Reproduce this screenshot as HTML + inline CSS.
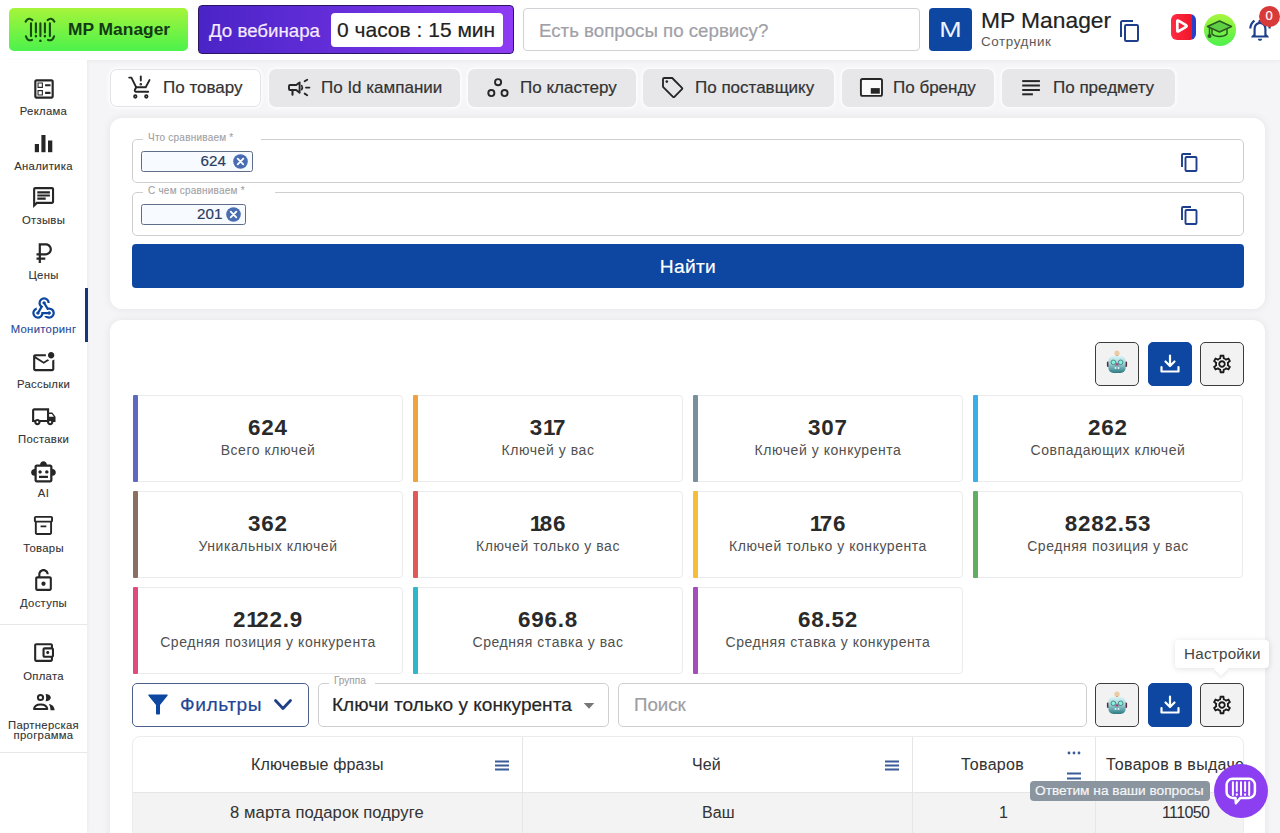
<!DOCTYPE html>
<html><head><meta charset="utf-8"><style>
*{box-sizing:border-box;margin:0;padding:0}
html,body{width:1280px;height:833px;overflow:hidden;background:#f5f5f7;font-family:"Liberation Sans",sans-serif;color:#222}
.abs{position:absolute}
.t{position:absolute;white-space:nowrap;-webkit-text-stroke:0.2px currentColor}
.th{-webkit-text-stroke:0.05px currentColor}
.nav,.flabel{-webkit-text-stroke:0.1px currentColor}
#header{position:absolute;left:0;top:0;width:1280px;height:60px;background:#fff;box-shadow:0 1px 4px rgba(0,0,0,.05)}
#sidebar{position:absolute;left:0;top:60px;width:87px;height:773px;background:#fff;box-shadow:1px 0 3px rgba(0,0,0,.03)}
.nav{position:absolute;left:0;width:87px;text-align:center;font-size:11.3px;color:#333;line-height:11.5px;letter-spacing:0.3px}
.tab{position:absolute;top:68.5px;height:38px;border-radius:7px;background:#e7e7e9;box-shadow:0 0 3px 2px rgba(255,255,255,.7)}
.tab.active{background:#fff;border:1px solid #e4e4e6}
.tab .t{top:10px;font-size:17px;color:#333;line-height:20px}
.card{position:absolute;left:110px;width:1155px;background:#fff;border-radius:12px;box-shadow:0 0 9px rgba(0,0,0,.075)}
.field{position:absolute;left:132px;width:1112px;border:1px solid #cfcfd2;border-radius:5px}
.flabel{position:absolute;font-size:10px;color:#a0a0a4;background:#fff;padding:0 5px;line-height:12px;white-space:nowrap}
.chip{position:absolute;height:21px;border:1.5px solid #606d8a;border-radius:2.5px;background:#f7fbff}
.chip .t{font-size:15.2px;color:#2c3b63;top:1px;line-height:18px}
.chip svg{position:absolute}
.ib{position:absolute;width:44px;height:44px;border:1.5px solid #3c3c3c;border-radius:5px;background:#f2f2f2}
.ib.blue{background:#0d47a1;border-color:#0d47a1}
.stat{position:absolute;width:270px;height:87px;border:1px solid #ebebed;border-radius:4px;background:#fff}
.stat .bar{position:absolute;left:-1px;top:-1px;bottom:-1px;width:5px;border-radius:1px}
.stat .n{position:absolute;left:0;right:0;top:18.5px;text-align:center;font-size:22.4px;font-weight:bold;color:#2a2a2a;letter-spacing:0.8px;line-height:26px}
.stat .n i{font-style:normal;letter-spacing:-2.4px}
.stat .l{position:absolute;left:0;right:0;top:46.2px;text-align:center;font-size:14px;color:#505050;letter-spacing:0.55px;line-height:17px}
.th{position:absolute;font-size:16px;color:#333;line-height:19px;white-space:nowrap;letter-spacing:0.15px}
</style></head><body>
<div id="header"></div>
<div class="abs" style="left:9px;top:8px;width:179px;height:43px;border-radius:5px;background:linear-gradient(#a6f43a,#4cf24c)"></div>
<svg class="abs" style="left:20px;top:12px" width="40" height="34" viewBox="0 0 40 34" fill="none" stroke="#164a12" stroke-width="2.1" stroke-linecap="round">
<path d="M5.6 9.6Q8.6 4.8 12.4 8.1M27.6 8.1Q31.4 4.8 34.4 9.6M5.9 24.3Q7.4 29.6 12 27.9M28 27.9Q32.6 29.6 34.1 24.3"/>
<path d="M11 11.2v12.9M29.9 11.2v12.9M15.9 11.2v9.3M24.9 11.2v9.3M20.4 11.2v12.9"/>
<path d="M15.9 23.9v.3M24.9 23.9v.3M20.4 28.6v.3" stroke-width="2.4"/></svg>
<div class="t" style="left:68px;top:19px;font-size:17.4px;font-weight:bold;color:#123a14;line-height:20px;-webkit-text-stroke:0">MP Manager</div>
<div class="abs" style="left:198px;top:5px;width:316px;height:49px;border-radius:4px;border:1.6px solid #2a1660;background:linear-gradient(90deg,#4a24c6,#6b30de 55%,#8e3cf4)"></div>
<div class="t" style="left:209px;top:19.5px;font-size:18.7px;color:#f6eaff;line-height:22px">До вебинара</div>
<div class="abs" style="left:331px;top:12.5px;width:172px;height:34px;background:#fff;border-radius:4px"></div>
<div class="t" style="left:337px;top:18px;font-size:21px;color:#222;line-height:24px">0 часов : 15 мин</div>
<div class="abs" style="left:523px;top:8px;width:397px;height:43px;border:1px solid #d2d2d6;border-radius:4px;background:#fff"></div>
<div class="t" style="left:539px;top:20px;font-size:18.7px;color:#a0a0a6;line-height:22px">Есть вопросы по сервису?</div>
<div class="abs" style="left:929px;top:8px;width:43px;height:43px;border-radius:4px;background:#0d47a1"></div>
<div class="t" style="left:929px;top:18px;width:43px;text-align:center;font-size:21.5px;color:#eef4ff;line-height:24px;transform:scaleX(1.25);-webkit-text-stroke:0">M</div>
<div class="t" style="left:981px;top:7px;font-size:22.8px;color:#222;line-height:26px">MP Manager</div>
<div class="t" style="left:981px;top:34px;font-size:13.4px;color:#5a5a5a;letter-spacing:0.6px;line-height:16px;-webkit-text-stroke:0">Сотрудник</div>
<svg class="abs" style="left:1119px;top:19px" width="22" height="24" viewBox="0 0 22 24" fill="none" stroke="#1d3f8c" stroke-width="2"><path d="M2 18V3.5C2 2.7 2.7 2 3.5 2H14"/><rect x="6" y="6" width="13" height="16" rx="1.2"/></svg>
<div class="abs" style="left:1170.5px;top:13.5px;width:25.5px;height:26px;border-radius:6px;background:linear-gradient(90deg,#ff2c44 0%,#f01628 83%,#2a3fc8 85%)"></div>
<svg class="abs" style="left:1170px;top:13px" width="26" height="26" viewBox="0 0 26 26" fill="none" stroke="#fff" stroke-width="2.7" stroke-linejoin="round"><path d="M7.3 8.6Q7.3 6.9 8.8 7.8L16 12.2Q17.3 13 16 13.8L8.8 18.2Q7.3 19.1 7.3 17.4Z"/></svg>
<div class="abs" style="left:1203.5px;top:13.5px;width:32px;height:32px;border-radius:50%;background:linear-gradient(#a8f53c,#4ef04e)"></div>
<svg class="abs" style="left:1206px;top:19px" width="27" height="22" viewBox="0 0 27 22" fill="none" stroke="#2a5a22" stroke-width="1.5" stroke-linejoin="round">
<path d="M1.5 7.5 13.5 2l12 5.5-12 5.5z" fill="#5fcf45"/><path d="M6 10v5c2 2 5 2.5 7.5 2.5s5.5-.5 7.5-2.5v-5"/><path d="M3.5 8.5v7"/><circle cx="3.5" cy="17" r="1.3" fill="#2a5a22"/></svg>
<svg class="abs" style="left:1247px;top:17px" width="26" height="26" viewBox="0 0 24 24" fill="#1d3f8c"><path d="M12 22c1.1 0 2-.9 2-2h-4c0 1.1.9 2 2 2zm6-6v-5c0-3.07-1.63-5.64-4.5-6.32V4c0-.83-.67-1.5-1.5-1.5s-1.5.67-1.5 1.5v.68C7.64 5.36 6 7.92 6 11v5l-2 2v1h16v-1l-2-2zm-2 1H8v-6c0-2.48 1.51-4.5 4-4.5s4 2.02 4 4.5v6zM7.58 4.08 6.15 2.65C3.75 4.48 2.17 7.3 2.03 10.5h2c.15-2.65 1.51-4.97 3.55-6.42zm12.39 6.42h2c-.15-3.2-1.73-6.02-4.12-7.85l-1.42 1.43c2.02 1.45 3.39 3.77 3.54 6.42z"/></svg>
<div class="abs" style="left:1258.5px;top:5.5px;width:21px;height:21px;border-radius:50%;background:#d83a3a"></div>
<div class="t" style="left:1258.5px;top:8px;width:21px;text-align:center;font-size:13px;color:#fff;line-height:15px">0</div>
<div id="sidebar"></div>
<svg class="abs" style="left:30.85px;top:75.65px;color:#262626" width="26.00" height="26.00" viewBox="0 0 24 24" fill="#262626"><path d="M13 7.5h5v2h-5zm0 7h5v2h-5zM19 3H5c-1.1 0-2 .9-2 2v14c0 1.1.9 2 2 2h14c1.1 0 2-.9 2-2V5c0-1.1-.9-2-2-2zm0 16H5V5h14v14zM11 6H6v5h5V6zm-1 4H7V7h3v3zm1 3H6v5h5v-5zm-1 4H7v-3h3v3z"/></svg>
<div class="nav" style="top:106px;color:#333">Реклама</div>
<svg class="abs" style="left:34px;top:134px" width="20" height="19" viewBox="0 0 20 19" fill="#262626"><rect x="0.8" y="10" width="4.2" height="8.2"/><rect x="7.4" y="1" width="4.1" height="17.2"/><rect x="14" y="6.5" width="4.3" height="11.7"/></svg>
<div class="nav" style="top:161px;color:#333">Аналитика</div>
<svg class="abs" style="left:30.70px;top:184.70px;color:#262626" width="25.20" height="25.20" viewBox="0 0 24 24" fill="#262626"><path d="M4 4h16v12H5.17L4 17.17V4m0-2c-1.1 0-1.99.9-1.99 2L2 22l4-4h14c1.1 0 2-.9 2-2V4c0-1.1-.9-2-2-2H4zm2 10h8v2H6v-2zm0-3h12v2H6V9zm0-3h12v2H6V6z"/></svg>
<div class="nav" style="top:215px;color:#333">Отзывы</div>
<svg class="abs" style="left:30.59px;top:239.59px;color:#262626" width="26.42" height="26.42" viewBox="0 0 24 24" fill="#262626"><path d="M13.5 3H7v9H5v2h2v2H5v2h2v3h2v-3h4v-2H9v-2h4.5c3.04 0 5.5-2.46 5.5-5.5S16.54 3 13.5 3zm0 9H9V5h4.5C15.43 5 17 6.57 17 8.5S15.43 12 13.5 12z"/></svg>
<div class="nav" style="top:270px;color:#333">Цены</div>
<svg class="abs" style="left:30.05px;top:294.61px;color:#0d47a1" width="27.10" height="27.10" viewBox="0 0 24 24" fill="#0d47a1"><path d="M7 21q-2.075 0-3.537-1.463Q2 18.075 2 16q0-1.8 1.113-3.163Q4.225 11.475 6 11.125V13.2q-.875.3-1.438 1.075Q4 15.05 4 16q0 1.25.875 2.125T7 19q1.250 0 2.125-.875T10 16v-1h5.875q.2-.225.487-.363Q16.65 14.5 17 14.5q.625 0 1.062.438.438.437.438 1.062t-.438 1.062Q17.625 17.5 17 17.5q-.35 0-.638-.137-.287-.138-.487-.363H11.9q-.35 1.725-1.725 2.863Q8.8 21 7 21Zm10 0q-1.4 0-2.55-.7-1.15-.7-1.8-1.8h2.675q.35.25.775.375Q16.525 19 17 19q1.25 0 2.125-.875T20 16q0-1.25-.875-2.125T17 13q-.5 0-.925.138-.425.137-.8.412l-3.05-5.075q-.525-.1-.875-.5Q11 7.575 11 7q0-.625.438-1.062Q11.875 5.5 12.5 5.5t1.062.438Q14 6.375 14 7v.213q0 .087-.05.212l2.175 3.650q.2-.05.425-.063Q16.775 11 17 11q2.075 0 3.538 1.462Q22 13.925 22 16q0 2.075-1.462 3.537Q19.075 21 17 21Zm-10-3.5q-.625 0-1.062-.438Q5.5 16.625 5.5 16q0-.55.35-.95.35-.4.85-.525l2.35-3.9q-.725-.675-1.138-1.613Q7.5 8.075 7.5 7q0-2.075 1.463-3.538Q10.425 2 12.5 2t3.538 1.462Q17.5 4.925 17.5 7h-2q0-1.25-.875-2.125T12.5 4q-1.25 0-2.125.875T9.5 7q0 1.075.65 1.887.65.813 1.650 1.063l-3.375 5.625q.05.125.063.213.012.087.012.212 0 .625-.438 1.062Q7.625 17.5 7 17.5Z"/></svg>
<div class="nav" style="top:324px;color:#1f4a9a">Мониторинг</div>
<svg class="abs" style="left:31.02px;top:349.98px;color:#262626" width="25.46" height="25.46" viewBox="0 0 24 24" fill="#262626"><path d="M22 8.98V18c0 1.1-.9 2-2 2H4c-1.1 0-2-.9-2-2V6c0-1.1.9-2 2-2h10.1c-.06.32-.1.66-.1 1s.04.68.1 1H4l8 5 3.67-2.29c.47.43 1.02.76 1.63.98L12 13 4 8v10h16V9.9c.74-.15 1.42-.48 2-.92zM16 5c0 1.66 1.34 3 3 3s3-1.34 3-3-1.34-3-3-3-3 1.34-3 3z"/></svg>
<div class="nav" style="top:379px;color:#333">Рассылки</div>
<svg class="abs" style="left:31.16px;top:403.66px;color:#262626" width="25.59" height="25.59" viewBox="0 0 24 24" fill="#262626"><path d="M20 8h-3V4H3c-1.1 0-2 .9-2 2v11h2c0 1.66 1.34 3 3 3s3-1.34 3-3h6c0 1.66 1.34 3 3 3s3-1.34 3-3h2v-5l-3-4zm-.5 1.5 1.96 2.5H17V9.5h2.5zM6 18c-.55 0-1-.45-1-1s.45-1 1-1 1 .45 1 1-.45 1-1 1zm2.22-3c-.55-.61-1.33-1-2.22-1s-1.67.39-2.22 1H3V6h12v9H8.22zM18 18c-.55 0-1-.45-1-1s.45-1 1-1 1 .45 1 1-.45 1-1 1z"/></svg>
<div class="nav" style="top:434px;color:#333">Поставки</div>
<svg class="abs" style="left:30.48px;top:458.64px;color:#262626" width="26.94" height="26.94" viewBox="0 0 24 24" fill="#262626"><path d="M20 9V7c0-1.1-.9-2-2-2h-3c0-1.66-1.34-3-3-3S9 3.34 9 5H6c-1.1 0-2 .9-2 2v2c-1.66 0-3 1.34-3 3s1.34 3 3 3v4c0 1.1.9 2 2 2h12c1.1 0 2-.9 2-2v-4c1.66 0 3-1.34 3-3s-1.34-3-3-3zm-2 10H6V7h12v12zm-9-6c-.83 0-1.5-.67-1.5-1.5S8.17 10 9 10s1.5.67 1.5 1.5S9.83 13 9 13zm7.5-1.5c0 .83-.67 1.5-1.5 1.5s-1.5-.67-1.5-1.5.67-1.5 1.5-1.5 1.5.67 1.5 1.5zM8 15h8v2H8v-2z"/></svg>
<div class="nav" style="top:488px;color:#333">AI</div>
<svg class="abs" style="left:32.34px;top:514.24px;color:#262626" width="22.92" height="22.92" viewBox="0 0 24 24" fill="#262626"><path d="M20 2H4c-1 0-2 .9-2 2v3.01c0 .72.43 1.34 1 1.69V20c0 1.1 1.1 2 2 2h14c.9 0 2-.9 2-2V8.7c.57-.35 1-.97 1-1.69V4c0-1.1-1-2-2-2zm-1 18H5V9h14v11zm1-13H4V4h16v3zM9 12h6v2H9z"/></svg>
<div class="nav" style="top:543px;color:#333">Товары</div>
<svg class="abs" style="left:31.24px;top:568.01px;color:#262626;transform:scaleX(-1)" width="25.02" height="25.02" viewBox="0 0 24 24" fill="#262626"><path d="M12 17c1.1 0 2-.9 2-2s-.9-2-2-2-2 .9-2 2 .9 2 2 2zm6-9h-1V6c0-2.76-2.24-5-5-5S7 3.24 7 6h2c0-1.66 1.34-3 3-3s3 1.34 3 3v2H6c-1.1 0-2 .9-2 2v10c0 1.1.9 2 2 2h12c1.1 0 2-.9 2-2V10c0-1.1-.9-2-2-2zm0 12H6V10h12v10z"/></svg>
<div class="nav" style="top:598px;color:#333">Доступы</div>
<svg class="abs" style="left:31.43px;top:640.30px;color:#262626" width="25.10" height="25.10" viewBox="0 0 24 24" fill="#262626"><path d="M21 7.28V5c0-1.1-.9-2-2-2H5c-1.11 0-2 .9-2 2v14c0 1.1.89 2 2 2h14c1.1 0 2-.9 2-2v-2.28c.59-.35 1-.98 1-1.72V9c0-.74-.41-1.37-1-1.72zM20 9v6h-7V9h7zM5 19V5h14v2h-6c-1.1 0-2 .9-2 2v6c0 1.1.9 2 2 2h6v2H5zm11-5.5c.83 0 1.5-.67 1.5-1.5s-.67-1.5-1.5-1.5-1.5.67-1.5 1.5.67 1.5 1.5 1.5z"/></svg>
<div class="nav" style="top:671px;color:#333">Оплата</div>
<svg class="abs" style="left:30px;top:690px" width="28" height="24" viewBox="0 0 28 24"><circle cx="10.5" cy="7.5" r="2.6" fill="none" stroke="#262626" stroke-width="2"/><path d="M15.7 4A5.1 3.6 0 0 1 15.7 11.2Q16.6 7.6 15.7 4Z" fill="#262626"/><path d="M4 19.1C4.3 15.6 7 14.4 10.6 14.4S17 15.6 17.3 19.1Z" fill="none" stroke="#262626" stroke-width="2" stroke-linejoin="round"/><path d="M18.8 14C22.3 14.5 24.6 16.8 24.6 20.3H20.5C20.5 17.8 19.9 15.5 18.8 14Z" fill="#262626"/></svg>
<div class="nav" style="top:719.5px;line-height:10.5px;color:#333">Партнерская<br>программа</div>
<div class="abs" style="left:85px;top:288px;width:2.7px;height:54px;background:#17357a"></div>
<div class="abs" style="left:0;top:624px;width:87px;height:1px;background:#e8e8ea"></div>
<div class="abs" style="left:0;top:752px;width:87px;height:1px;background:#e8e8ea"></div>
<div class="tab active" style="left:110px;width:151px"></div>
<svg class="abs" style="left:120px;top:70px" width="40" height="35" viewBox="0 0 40 35" fill="none" stroke="#262626" stroke-width="1.9" stroke-linecap="round" stroke-linejoin="round"><path d="M9.2 7.6h2.2l4.8 9.7h9.5l3.8-7.2"/><path d="M16.2 17.3l-1.3 2.4c-.5.9.1 2.1 1.2 2.1h12.1"/><circle cx="15.3" cy="26.5" r="1.3" stroke-width="1.7"/><circle cx="26.3" cy="26.5" r="1.3" stroke-width="1.7"/><path d="M20.8 6.5v4"/><circle cx="20.8" cy="14.3" r="0.5" stroke-width="1.6"/></svg>
<div class="t" style="left:163px;top:78px;font-size:17px;color:#333;line-height:20px">По товару</div>
<div class="tab" style="left:269px;width:191px"></div>
<svg class="abs" style="left:280px;top:70px" width="40" height="35" viewBox="0 0 40 35" fill="none" stroke="#262626" stroke-width="1.9" stroke-linecap="round" stroke-linejoin="round"><path d="M10 15h6.2l3.4-2.6v10.4L16.2 20H10c-.6 0-1-.4-1-1v-3c0-.6.4-1 1-1z"/><path d="M12.5 20.5v4.3" stroke-width="2.1"/><path d="M21.7 15.6q1.3 2 0 4" stroke-width="1.7"/><path d="M24.7 11.3l2.5-1.6M26 17.6h3.4M24.7 23.6l2.5 1.6"/></svg>
<div class="t" style="left:321px;top:78px;font-size:17px;color:#333;line-height:20px">По Id кампании</div>
<div class="tab" style="left:468px;width:168px"></div>
<svg class="abs" style="left:480px;top:70px" width="40" height="35" viewBox="0 0 40 35" fill="none" stroke="#262626" stroke-width="1.9"><circle cx="18.07" cy="12.18" r="3.05"/><circle cx="11.34" cy="23.03" r="3.05"/><circle cx="24.58" cy="23.03" r="3.05"/></svg>
<div class="t" style="left:520px;top:78px;font-size:17px;color:#333;line-height:20px">По кластеру</div>
<div class="tab" style="left:643px;width:191px"></div>
<svg class="abs" style="left:655px;top:70px" width="40" height="35" viewBox="0 0 40 35" fill="none" stroke="#262626" stroke-width="1.85" stroke-linejoin="round"><path d="M8 9.2Q8 8 9.2 8H17.2L27 17.8Q27.7 18.5 27 19.2L19.4 26.8Q18.7 27.5 18 26.8L8 16.8Z"/><circle cx="11.8" cy="11.6" r="1.3" fill="#262626" stroke="none"/></svg>
<div class="t" style="left:695px;top:78px;font-size:17px;color:#333;line-height:20px">По поставщику</div>
<div class="tab" style="left:842px;width:152px"></div>
<svg class="abs" style="left:850px;top:70px" width="40" height="35" viewBox="0 0 40 35" fill="none" stroke="#262626" stroke-width="1.9"><rect x="10.9" y="9" width="21.1" height="16.9" rx="1.6" fill="#fbfbfb"/><rect x="20.8" y="18.1" width="9" height="5.6" fill="#262626" stroke="none"/></svg>
<div class="t" style="left:893px;top:78px;font-size:17px;color:#333;line-height:20px">По бренду</div>
<div class="tab" style="left:1002px;width:173px"></div>
<svg class="abs" style="left:1020px;top:78px" width="22" height="19" viewBox="0 0 22 19" fill="#262626"><rect x="2.2" y="2.1" width="17.7" height="2"/><rect x="2.2" y="6.5" width="17.7" height="2"/><rect x="2.2" y="11" width="17.7" height="2"/><rect x="2.2" y="15.3" width="10.7" height="2"/></svg>
<div class="t" style="left:1053px;top:78px;font-size:17px;color:#333;line-height:20px">По предмету</div>
<div class="card" style="top:118px;height:191px"></div>
<div class="field" style="top:139px;height:44px"></div>
<div class="flabel" style="left:143px;top:132px;width:118px;letter-spacing:0.22px">Что сравниваем *</div>
<div class="chip" style="left:141px;top:151px;width:112px"></div>
<div class="t" style="left:200.5px;top:152px;font-size:15.2px;color:#2c3b63;line-height:18px">624</div>
<svg class="abs" style="left:232.5px;top:153.5px" width="15" height="15" viewBox="0 0 15 15"><circle cx="7.5" cy="7.5" r="7.3" fill="#4a6db2"/><path d="M4.7 4.7l5.6 5.6M10.3 4.7l-5.6 5.6" stroke="#fff" stroke-width="1.8" stroke-linecap="round"/></svg>
<svg class="abs" style="left:1180px;top:152px" width="20" height="21" viewBox="0 0 20 21" fill="none" stroke="#1d3f8c" stroke-width="1.9"><path d="M2 15V3C2 2.4 2.4 2 3 2h8"/><rect x="5.5" y="5" width="11" height="14" rx="1"/></svg>
<div class="field" style="top:192px;height:44px"></div>
<div class="flabel" style="left:143px;top:185px;width:132px;letter-spacing:0.22px">С чем сравниваем *</div>
<div class="chip" style="left:141px;top:204px;width:105px"></div>
<div class="t" style="left:197px;top:205px;font-size:15.2px;color:#2c3b63;line-height:18px">201</div>
<svg class="abs" style="left:225.5px;top:206.5px" width="15" height="15" viewBox="0 0 15 15"><circle cx="7.5" cy="7.5" r="7.3" fill="#4a6db2"/><path d="M4.7 4.7l5.6 5.6M10.3 4.7l-5.6 5.6" stroke="#fff" stroke-width="1.8" stroke-linecap="round"/></svg>
<svg class="abs" style="left:1180px;top:205px" width="20" height="21" viewBox="0 0 20 21" fill="none" stroke="#1d3f8c" stroke-width="1.9"><path d="M2 15V3C2 2.4 2.4 2 3 2h8"/><rect x="5.5" y="5" width="11" height="14" rx="1"/></svg>
<div class="abs" style="left:132px;top:244px;width:1112px;height:44px;background:#0d47a1;border-radius:4px"></div>
<div class="t" style="left:132px;top:256px;width:1112px;text-align:center;font-size:19.2px;color:#fff;letter-spacing:0.3px;line-height:22px">Найти</div>
<div class="card" style="top:320px;height:540px"></div>
<div class="ib" style="left:1095px;top:342px"></div>
<svg class="abs" style="left:1106px;top:350px" width="22" height="24" viewBox="0 0 22 24">
<defs><linearGradient id="rg342" x1="0" y1="0" x2="0" y2="1"><stop offset="0" stop-color="#d8f3f5"/><stop offset="0.45" stop-color="#9cd3d8"/><stop offset="1" stop-color="#2c7a80"/></linearGradient></defs>
<rect x="10" y="4.6" width="2" height="2" fill="#6b5848"/><circle cx="11" cy="3.2" r="2.6" fill="#ebcba3"/>
<rect x="0.9" y="11.5" width="2.6" height="5.5" rx="1.1" fill="#5b2a3c"/><rect x="18.5" y="11.5" width="2.6" height="5.5" rx="1.1" fill="#5b2a3c"/>
<rect x="2.4" y="6" width="17.2" height="17" rx="5" fill="url(#rg342)"/>
<circle cx="7.4" cy="12.3" r="2.3" fill="#86f2d6" stroke="#40707a" stroke-width="0.8"/><circle cx="14.6" cy="12.3" r="2.3" fill="#86f2d6" stroke="#40707a" stroke-width="0.8"/>
<path d="M11 12.2L13.1 15.6H8.9Z" fill="#9c4d80"/>
<rect x="8.7" y="17.2" width="1.6" height="1.6" fill="#f4fafa"/><rect x="11.7" y="17.2" width="1.6" height="1.6" fill="#f4fafa"/></svg>
<div class="ib blue" style="left:1148px;top:342px"></div>
<svg class="abs" style="left:1160px;top:354px" width="20" height="20" viewBox="0 0 20 20" fill="none" stroke="#fff" stroke-width="2.2" stroke-linecap="round" stroke-linejoin="round"><path d="M10 1.5v10M5.5 7.5l4.5 4.5 4.5-4.5"/><path d="M1.5 13v4.5h17V13"/></svg>
<div class="ib" style="left:1200px;top:342px"></div>
<svg class="abs" style="left:1211px;top:353px" width="22" height="22" viewBox="0 0 24 24" fill="#1a1a1a"><path d="M19.43 12.98c.04-.32.07-.64.07-.98 0-.34-.03-.66-.07-.98l2.11-1.65c.19-.15.24-.42.12-.64l-2-3.46c-.09-.16-.26-.25-.44-.25-.06 0-.12.01-.17.03l-2.49 1c-.52-.4-1.08-.73-1.69-.98l-.38-2.65C14.46 2.18 14.25 2 14 2h-4c-.25 0-.46.18-.49.42l-.38 2.65c-.61.25-1.17.59-1.69.98l-2.49-1c-.06-.02-.12-.03-.18-.03-.17 0-.34.09-.43.25l-2 3.46c-.13.22-.07.49.12.64l2.11 1.65c-.04.32-.07.65-.07.98 0 .33.03.66.07.98l-2.11 1.65c-.19.15-.24.42-.12.64l2 3.46c.09.16.26.25.44.25.06 0 .12-.01.17-.03l2.49-1c.52.4 1.08.73 1.69.98l.38 2.65c.03.24.24.42.49.42h4c.25 0 .46-.18.49-.42l.38-2.65c.61-.25 1.17-.59 1.69-.98l2.49 1c.06.02.12.03.18.03.17 0 .34-.09.43-.25l2-3.46c.12-.22.07-.49-.12-.64l-2.11-1.65zm-1.98-1.71c.04.31.05.52.05.73 0 .21-.02.43-.05.73l-.14 1.13.89.7 1.08.84-.7 1.21-1.27-.51-1.04-.42-.9.68c-.43.32-.84.56-1.25.73l-1.06.43-.16 1.13-.2 1.350h-1.4l-.19-1.35-.16-1.13-1.06-.43c-.43-.18-.83-.41-1.23-.71l-.91-.7-1.06.43-1.27.51-.7-1.21 1.08-.84.89-.7-.14-1.13c-.03-.31-.05-.54-.05-.74s.02-.43.05-.73l.14-1.13-.89-.7-1.08-.84.7-1.21 1.27.51 1.04.42.9-.68c.43-.32.84-.56 1.25-.73l1.06-.43.16-1.13.2-1.35h1.39l.19 1.35.16 1.13 1.06.43c.43.18.83.41 1.23.71l.91.7 1.06-.43 1.27-.51.7 1.21-1.07.85-.89.7.14 1.13zM12 8c-2.21 0-4 1.79-4 4s1.79 4 4 4 4-1.79 4-4-1.79-4-4-4zm0 6c-1.1 0-2-.9-2-2s.9-2 2-2 2 .9 2 2-.9 2-2 2z"/></svg>
<div class="stat" style="left:133px;top:395px"><div class="bar" style="background:#5c6bc0"></div><div class="n">624</div><div class="l">Всего ключей</div></div>
<div class="stat" style="left:413px;top:395px"><div class="bar" style="background:#f0a33c"></div><div class="n">3<i>1</i>7</div><div class="l">Ключей у вас</div></div>
<div class="stat" style="left:693px;top:395px"><div class="bar" style="background:#78909c"></div><div class="n">307</div><div class="l">Ключей у конкурента</div></div>
<div class="stat" style="left:973px;top:395px"><div class="bar" style="background:#3aaee8"></div><div class="n">262</div><div class="l">Совпадающих ключей</div></div>
<div class="stat" style="left:133px;top:491px"><div class="bar" style="background:#8d6e63"></div><div class="n">362</div><div class="l">Уникальных ключей</div></div>
<div class="stat" style="left:413px;top:491px"><div class="bar" style="background:#e05a5a"></div><div class="n"><i>1</i>86</div><div class="l">Ключей только у вас</div></div>
<div class="stat" style="left:693px;top:491px"><div class="bar" style="background:#f5bd3a"></div><div class="n"><i>1</i>76</div><div class="l">Ключей только у конкурента</div></div>
<div class="stat" style="left:973px;top:491px"><div class="bar" style="background:#5fae62"></div><div class="n">8282.53</div><div class="l">Средняя позиция у вас</div></div>
<div class="stat" style="left:133px;top:587px"><div class="bar" style="background:#e04b7e"></div><div class="n">2<i>1</i>22.9</div><div class="l">Средняя позиция у конкурента</div></div>
<div class="stat" style="left:413px;top:587px"><div class="bar" style="background:#2fb8c8"></div><div class="n">696.8</div><div class="l">Средняя ставка у вас</div></div>
<div class="stat" style="left:693px;top:587px"><div class="bar" style="background:#a64cbc"></div><div class="n">68.52</div><div class="l">Средняя ставка у конкурента</div></div>
<div class="abs" style="left:1175px;top:640px;width:94px;height:28px;background:#fff;border-radius:4px;box-shadow:0 1px 6px rgba(0,0,0,.12)"></div>
<div class="abs" style="left:1216px;top:664px;width:10px;height:10px;background:#fff;transform:rotate(45deg);box-shadow:2px 2px 3px rgba(0,0,0,.06)"></div>
<div class="abs" style="left:1176px;top:640px;width:92px;height:27px;background:#fff;border-radius:4px"></div>
<div class="t" style="left:1184px;top:645px;font-size:15.2px;color:#444;line-height:18px;letter-spacing:0.25px;-webkit-text-stroke:0">Настройки</div>
<div class="abs" style="left:132px;top:683px;width:177px;height:44px;border:1.5px solid #4d5f8c;border-radius:5px;background:#fff"></div>
<svg class="abs" style="left:147px;top:692px" width="22" height="23" viewBox="0 0 22 23" fill="#0d47a1"><path d="M2 2.5h18c.6 0 .9.7.5 1.2L13 13v8.5c0 .6-.5 1-1 1h-2c-.6 0-1-.4-1-1V13L1.5 3.7C1.1 3.2 1.4 2.5 2 2.5z"/></svg>
<div class="t" style="left:180px;top:694px;font-size:19.2px;color:#1f4796;letter-spacing:0.55px;line-height:22px">Фильтры</div>
<svg class="abs" style="left:273px;top:698px" width="20" height="14" viewBox="0 0 20 14" fill="none" stroke="#1f3f86" stroke-width="2.8" stroke-linecap="round" stroke-linejoin="round"><path d="M2.5 2.5l7.5 8 7.5-8"/></svg>
<div class="abs" style="left:318px;top:683px;width:291px;height:44px;border:1px solid #cfcfd2;border-radius:5px;background:#fff"></div>
<div class="flabel" style="left:329px;top:675px;width:46px">Группа</div>
<div class="t" style="left:332px;top:694px;font-size:19.1px;color:#262626;line-height:22px">Ключи только у конкурента</div>
<svg class="abs" style="left:583px;top:702px" width="12" height="8" viewBox="0 0 12 8" fill="#777"><path d="M0.7 1h10.6L6 6.8z"/></svg>
<div class="abs" style="left:618px;top:683px;width:469px;height:44px;border:1px solid #cfcfd2;border-radius:5px;background:#fff"></div>
<div class="t" style="left:634px;top:694px;font-size:18.7px;color:#9d9da3;line-height:22px">Поиск</div>
<div class="ib" style="left:1095px;top:683px"></div>
<svg class="abs" style="left:1106px;top:691px" width="22" height="24" viewBox="0 0 22 24">
<defs><linearGradient id="rg683" x1="0" y1="0" x2="0" y2="1"><stop offset="0" stop-color="#d8f3f5"/><stop offset="0.45" stop-color="#9cd3d8"/><stop offset="1" stop-color="#2c7a80"/></linearGradient></defs>
<rect x="10" y="4.6" width="2" height="2" fill="#6b5848"/><circle cx="11" cy="3.2" r="2.6" fill="#ebcba3"/>
<rect x="0.9" y="11.5" width="2.6" height="5.5" rx="1.1" fill="#5b2a3c"/><rect x="18.5" y="11.5" width="2.6" height="5.5" rx="1.1" fill="#5b2a3c"/>
<rect x="2.4" y="6" width="17.2" height="17" rx="5" fill="url(#rg683)"/>
<circle cx="7.4" cy="12.3" r="2.3" fill="#86f2d6" stroke="#40707a" stroke-width="0.8"/><circle cx="14.6" cy="12.3" r="2.3" fill="#86f2d6" stroke="#40707a" stroke-width="0.8"/>
<path d="M11 12.2L13.1 15.6H8.9Z" fill="#9c4d80"/>
<rect x="8.7" y="17.2" width="1.6" height="1.6" fill="#f4fafa"/><rect x="11.7" y="17.2" width="1.6" height="1.6" fill="#f4fafa"/></svg>
<div class="ib blue" style="left:1148px;top:683px"></div>
<svg class="abs" style="left:1160px;top:695px" width="20" height="20" viewBox="0 0 20 20" fill="none" stroke="#fff" stroke-width="2.2" stroke-linecap="round" stroke-linejoin="round"><path d="M10 1.5v10M5.5 7.5l4.5 4.5 4.5-4.5"/><path d="M1.5 13v4.5h17V13"/></svg>
<div class="ib" style="left:1200px;top:683px"></div>
<svg class="abs" style="left:1211px;top:694px" width="22" height="22" viewBox="0 0 24 24" fill="#1a1a1a"><path d="M19.43 12.98c.04-.32.07-.64.07-.98 0-.34-.03-.66-.07-.98l2.11-1.65c.19-.15.24-.42.12-.64l-2-3.46c-.09-.16-.26-.25-.44-.25-.06 0-.12.01-.17.03l-2.49 1c-.52-.4-1.08-.73-1.69-.98l-.38-2.65C14.46 2.18 14.25 2 14 2h-4c-.25 0-.46.18-.49.42l-.38 2.65c-.61.25-1.17.59-1.69.98l-2.49-1c-.06-.02-.12-.03-.18-.03-.17 0-.34.09-.43.25l-2 3.46c-.13.22-.07.49.12.64l2.11 1.65c-.04.32-.07.65-.07.98 0 .33.03.66.07.98l-2.11 1.65c-.19.15-.24.42-.12.64l2 3.46c.09.16.26.25.44.25.06 0 .12-.01.17-.03l2.49-1c.52.4 1.08.73 1.69.98l.38 2.65c.03.24.24.42.49.42h4c.25 0 .46-.18.49-.42l.38-2.65c.61-.25 1.17-.59 1.69-.98l2.49 1c.06.02.12.03.18.03.17 0 .34-.09.43-.25l2-3.46c.12-.22.07-.49-.12-.64l-2.11-1.65zm-1.98-1.71c.04.31.05.52.05.73 0 .21-.02.43-.05.73l-.14 1.13.89.7 1.08.84-.7 1.21-1.27-.51-1.04-.42-.9.68c-.43.32-.84.56-1.25.73l-1.06.43-.16 1.13-.2 1.350h-1.4l-.19-1.35-.16-1.13-1.06-.43c-.43-.18-.83-.41-1.23-.71l-.91-.7-1.06.43-1.27.51-.7-1.21 1.08-.84.89-.7-.14-1.13c-.03-.31-.05-.54-.05-.74s.02-.43.05-.73l.14-1.13-.89-.7-1.08-.84.7-1.21 1.27.51 1.04.42.9-.68c.43-.32.84-.56 1.25-.73l1.06-.43.16-1.13.2-1.35h1.39l.19 1.35.16 1.13 1.06.43c.43.18.83.41 1.23.71l.91.7 1.06-.43 1.27-.51.7 1.21-1.07.85-.89.7.14 1.13zM12 8c-2.21 0-4 1.79-4 4s1.79 4 4 4 4-1.79 4-4-1.79-4-4-4zm0 6c-1.1 0-2-.9-2-2s.9-2 2-2 2 .9 2 2-.9 2-2 2z"/></svg>
<div class="abs" style="left:132px;top:736px;width:1112px;height:120px;border:1px solid #ececee;border-radius:8px 8px 0 0;background:#fff;overflow:hidden"><div class="abs" style="left:0;top:55px;width:1112px;height:70px;background:#f3f3f3;border-top:1px solid #e6e6e8"></div><div class="abs" style="left:389px;top:0;width:1px;height:120px;background:#e6e6e8"></div><div class="abs" style="left:779px;top:0;width:1px;height:120px;background:#e6e6e8"></div><div class="abs" style="left:962px;top:0;width:1px;height:120px;background:#e6e6e8"></div></div>
<div class="th" style="left:251px;top:755px">Ключевые фразы</div>
<div class="th" style="left:692px;top:755px">Чей</div>
<div class="th" style="left:961px;top:755px;letter-spacing:0.3px">Товаров</div>
<div class="th" style="left:1106px;top:755px;letter-spacing:0.3px">Товаров в выдаче</div>
<svg class="abs" style="left:495px;top:760px" width="14" height="11" viewBox="0 0 14 11" fill="#3b5a98"><rect x="0" y="0.5" width="14" height="2"/><rect x="0" y="4.5" width="14" height="2"/><rect x="0" y="8.5" width="14" height="2"/></svg>
<svg class="abs" style="left:885px;top:760px" width="14" height="11" viewBox="0 0 14 11" fill="#3b5a98"><rect x="0" y="0.5" width="14" height="2"/><rect x="0" y="4.5" width="14" height="2"/><rect x="0" y="8.5" width="14" height="2"/></svg>
<svg class="abs" style="left:1067px;top:751px" width="14" height="4" viewBox="0 0 14 4" fill="#3b5a98"><circle cx="2" cy="2" r="1.4"/><circle cx="7" cy="2" r="1.4"/><circle cx="12" cy="2" r="1.4"/></svg>
<svg class="abs" style="left:1067px;top:772px" width="14" height="9" viewBox="0 0 14 9" fill="#3b5a98"><rect x="0" y="0.5" width="14" height="2"/><rect x="0" y="5.5" width="14" height="2"/></svg>
<div class="th" style="left:230px;top:803px;font-size:16.6px;letter-spacing:0.1px">8 марта подарок подруге</div>
<div class="th" style="left:702px;top:803px">Ваш</div>
<div class="th" style="left:999px;top:803px">1</div>
<div class="th" style="left:1162px;top:803px;letter-spacing:-0.6px">111050</div>
<div class="abs" style="left:1030px;top:781px;width:180px;height:20px;background:#8a959f;border-radius:4px"></div>
<div class="t" style="left:1035px;top:783px;font-size:13.7px;color:#f4f6f8;letter-spacing:0px;line-height:16px">Ответим на ваши вопросы</div>
<div class="abs" style="left:1214px;top:763.5px;width:54px;height:54px;border-radius:50%;background:#8b3ff0"></div>
<svg class="abs" style="left:1220px;top:770px" width="40" height="40" viewBox="0 0 40 40" fill="none" stroke="#fff" stroke-width="2.5" stroke-linejoin="round" stroke-linecap="round">
<path d="M12.5 8.85H29A5.9 5.9 0 0 1 34.9 14.75V22.05A5.9 5.9 0 0 1 29 27.95H20.2L15.9 33.3L15.5 27.95H12.5A5.9 5.9 0 0 1 6.6 22.05V14.75A5.9 5.9 0 0 1 12.5 8.85Z"/>
<path d="M12.9 12.3v12.8M21 12.3v12.8M29.2 12.3v12.8M16.8 12.3v8.8M25.1 12.3v8.8" stroke-width="2"/>
<path d="M16.8 24.4v.4M25.1 24.4v.4" stroke-width="2.2"/></svg>
</body></html>
